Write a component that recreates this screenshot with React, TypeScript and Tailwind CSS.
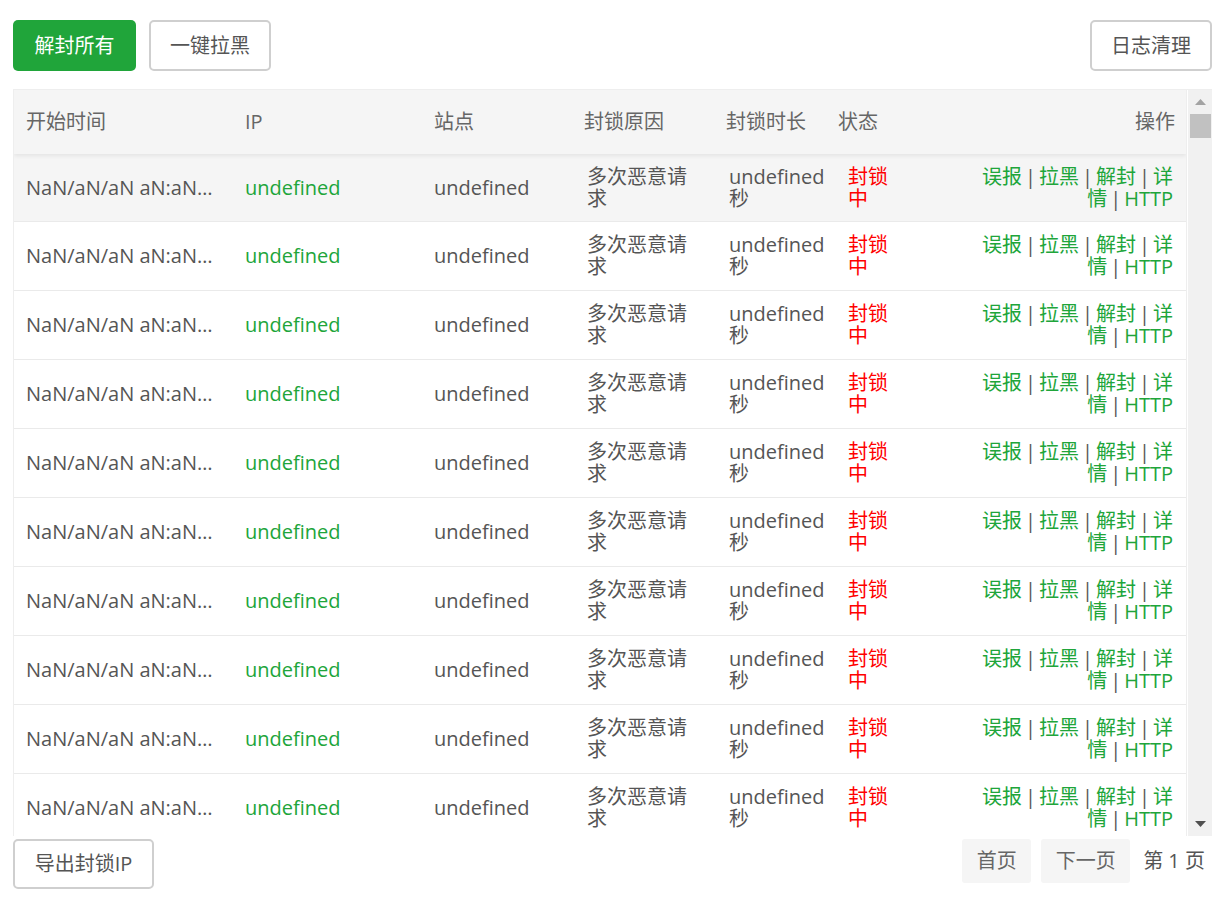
import React from 'react';

const rows = Array.from({ length: 10 });

function Sep() {
  return <span className="mx-[3px] text-[#555]">|</span>;
}

export default function App() {
  return (
    <div
      className="fixed inset-0 w-[1214px] h-[914px] bg-white text-[20px] leading-[22px] text-[#555] overflow-hidden"
      style={{ fontFamily: '"Open Sans", "Noto Sans CJK SC", sans-serif' }}
    >
      {/* top toolbar */}
      <div className="flex items-center justify-between pl-[13px] pr-[2px] pt-[20px]">
        <div className="flex gap-[13px]">
          <button className="h-[51px] w-[123px] rounded-[5px] bg-[#20a53a] text-white">解封所有</button>
          <button className="h-[51px] w-[122px] rounded-[5px] border-2 border-[#cfcfcf] text-[#555]">一键拉黑</button>
        </div>
        <button className="h-[51px] w-[122px] rounded-[5px] border-2 border-[#cfcfcf] text-[#555]">日志清理</button>
      </div>

      {/* table */}
      <div className="ml-[13px] mr-[2px] mt-[18px] h-[747px] flex border-l border-t border-[#eee]">
        <div className="flex-1 overflow-hidden border-r border-[#eee]">
          <div className="relative z-10 flex h-[64px] items-center bg-[#f5f5f5] text-[#666] shadow-[0_2px_4px_rgba(0,0,0,0.07)]">
            <div className="w-[219px] pl-[12px]">开始时间</div>
            <div className="w-[189px] pl-[12px]">IP</div>
            <div className="w-[150px] pl-[12px]">站点</div>
            <div className="w-[142px] pl-[12px]">封锁原因</div>
            <div className="w-[112px] pl-[12px]">封锁时长</div>
            <div className="w-[80px] pl-[12px]">状态</div>
            <div className="flex-1 pr-[11px] text-right">操作</div>
          </div>
          {rows.map((_, i) => (
            <div
              key={i}
              className={
                'flex items-center border-b border-[#eaeaea] ' +
                (i === 0 ? 'h-[68px] bg-[#f5f5f5]' : 'h-[69px]')
              }
            >
              <div className="w-[219px] pl-[12px] pr-[17px] truncate">NaN/aN/aN aN:aN:aN</div>
              <div className="w-[189px] pl-[12px] text-[#20a53a]">undefined</div>
              <div className="w-[153px] pl-[12px]">undefined</div>
              <div className="w-[142px] pl-[12px] pr-[30px]">多次恶意请求</div>
              <div className="w-[119px] pl-[12px] pr-[10px]">undefined 秒</div>
              <div className="w-[72px] pl-[12px] pr-[10px] text-[#ff0000]">封锁中</div>
              <div className="flex-1 pr-[13px] text-right text-[#20a53a]">
                误报<Sep />拉黑<Sep />解封<Sep />详
                <br />
                情<Sep />HTTP
              </div>
            </div>
          ))}
        </div>

        {/* scrollbar */}
        <div className="ml-[1px] w-[24px] flex flex-col items-center bg-[#f1f1f1]">
          <div className="h-[24px] flex items-center justify-center">
            <svg width="11" height="6" viewBox="0 0 11 6">
              <path d="M5.5 0 L11 6 L0 6 Z" fill="#a3a3a3" />
            </svg>
          </div>
          <div className="w-[21px] h-[24px] bg-[#c1c1c1]" />
          <div className="flex-1" />
          <div className="h-[24px] flex items-center justify-center">
            <svg width="11" height="6" viewBox="0 0 11 6">
              <path d="M0 0 L11 0 L5.5 6 Z" fill="#505050" />
            </svg>
          </div>
        </div>
      </div>

      {/* footer */}
      <div className="flex items-start justify-between pl-[13px] pr-[9px] mt-[3px]">
        <button className="h-[50px] w-[141px] rounded-[5px] border-2 border-[#cfcfcf] text-[#555]">导出封锁IP</button>
        <div className="flex items-center gap-[10px]">
          <div className="h-[44px] w-[69px] rounded-[3px] bg-[#f5f5f5] text-[#666] flex items-center justify-center">首页</div>
          <div className="h-[44px] w-[89px] rounded-[3px] bg-[#f5f5f5] text-[#666] flex items-center justify-center">下一页</div>
          <div className="ml-[3px] text-[#555]">第 1 页</div>
        </div>
      </div>
    </div>
  );
}
